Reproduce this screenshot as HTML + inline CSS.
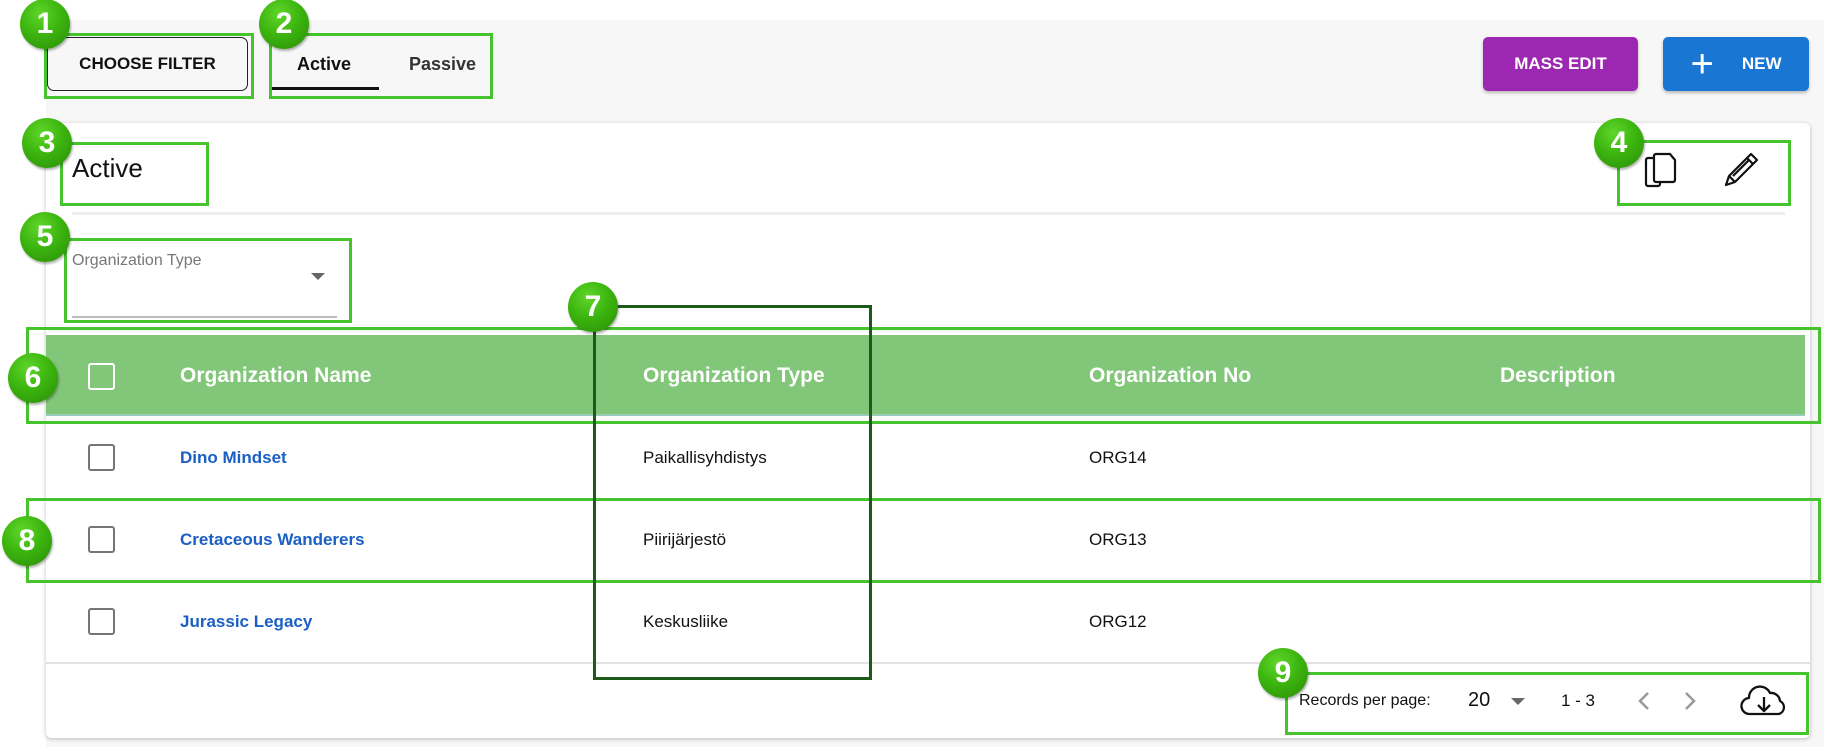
<!DOCTYPE html>
<html><head><meta charset="utf-8"><style>
*{box-sizing:border-box;margin:0;padding:0}
body{width:1824px;height:747px;position:relative;background:#fff;font-family:"Liberation Sans",Arial,sans-serif;overflow:hidden;color:#111}
.a{position:absolute}
.bg{left:46px;top:20px;right:0;bottom:0;background:#f7f7f7}
.card{left:46px;top:123px;width:1764px;height:615px;background:#fff;border-radius:5px;box-shadow:0 1px 4px rgba(0,0,0,.25)}
.btn{display:flex;align-items:center;justify-content:center;font-weight:bold;font-size:17px;border-radius:5px}
.box{border:3px solid #45c42d}
.badge{width:50px;height:50px;border-radius:50%;background:radial-gradient(circle at 40% 30%,#5fd62a 0%,#3cb50f 45%,#2a8c06 100%);color:#fff;font-weight:bold;font-size:30px;display:flex;align-items:center;justify-content:center;box-shadow:1px 2px 2px rgba(0,0,0,.3);transform:translate(-25px,-25px)}
.hd{color:#fff;font-weight:bold;font-size:21px;top:364px}
.cb{width:27px;height:27px;border:2.5px solid #757575;border-radius:3px}
.lnk{color:#1b5fc4;font-size:17px;font-weight:bold}
.tx{font-size:17px;color:#111}
</style></head><body>
<div class="a bg"></div>
<div class="a btn" style="left:47px;top:37px;width:201px;height:54px;border:1.5px solid #222;border-radius:7px;background:#f7f7f7;color:#111">CHOOSE FILTER</div>
<div class="a" style="left:297px;top:54px;font-size:18px;font-weight:bold">Active</div>
<div class="a" style="left:409px;top:54px;font-size:18px;font-weight:bold;color:#333">Passive</div>
<div class="a" style="left:271px;top:87px;width:108px;height:3px;background:#111"></div>
<div class="a btn" style="left:1483px;top:37px;width:155px;height:54px;background:#9c27b0;color:#fff;box-shadow:0 2px 3px rgba(0,0,0,.25)">MASS EDIT</div>
<div class="a btn" style="left:1663px;top:37px;width:146px;height:54px;background:#1976d2;color:#fff;box-shadow:0 2px 3px rgba(0,0,0,.25)"><span style="font-size:40px;font-weight:200;margin-right:28px;line-height:1">+</span>NEW</div>
<div class="a card"></div>
<div class="a" style="left:72px;top:153px;font-size:26px">Active</div>
<div class="a" style="left:72px;top:212px;width:1713px;height:3px;background:#eee"></div>
<svg class="a" style="left:1642px;top:150px" width="36" height="40" viewBox="0 0 36 40" fill="none" stroke="#111" stroke-width="2.2"><path d="M12 8H6a2 2 0 0 0-2 2v24a2 2 0 0 0 2 2h10a2 2 0 0 0 2-2v-2"/><path d="M14 4h14l5 6v20a2 2 0 0 1-2 2H14a2 2 0 0 1-2-2V6a2 2 0 0 1 2-2z"/></svg>
<svg class="a" style="left:1722px;top:150px" width="40" height="40" viewBox="0 0 40 40" fill="none" stroke="#111" stroke-width="2.2" stroke-linejoin="round"><path d="M29 4l6 6L13 32l-9 3 3-9z"/><path d="M25 8l6 6M7 26l6 6M11 26l16-16"/></svg>
<div class="a" style="left:72px;top:252px;font-size:16px;color:#777">Organization Type</div>
<div class="a" style="left:311px;top:273px;border-left:7px solid transparent;border-right:7px solid transparent;border-top:7px solid #666"></div>
<div class="a" style="left:72px;top:316px;width:265px;height:1.5px;background:#bbb"></div>
<div class="a" style="left:46px;top:335px;width:1759px;height:81px;background:#82c679;border-bottom:2px solid #9cb"></div>
<div class="a cb" style="left:88px;top:363px;border-color:#fff"></div>
<div class="a hd" style="left:180px">Organization Name</div>
<div class="a hd" style="left:643px">Organization Type</div>
<div class="a hd" style="left:1089px">Organization No</div>
<div class="a hd" style="left:1500px">Description</div>
<div class="a cb" style="left:88px;top:444px"></div>
<div class="a lnk" style="left:180px;top:448px">Dino Mindset</div>
<div class="a tx" style="left:643px;top:448px">Paikallisyhdistys</div>
<div class="a tx" style="left:1089px;top:448px">ORG14</div>
<div class="a cb" style="left:88px;top:526px"></div>
<div class="a lnk" style="left:180px;top:530px">Cretaceous Wanderers</div>
<div class="a tx" style="left:643px;top:530px">Piirijärjestö</div>
<div class="a tx" style="left:1089px;top:530px">ORG13</div>
<div class="a cb" style="left:88px;top:608px"></div>
<div class="a lnk" style="left:180px;top:612px">Jurassic Legacy</div>
<div class="a tx" style="left:643px;top:612px">Keskusliike</div>
<div class="a tx" style="left:1089px;top:612px">ORG12</div>
<div class="a" style="left:46px;top:662px;width:1764px;height:1.5px;background:#e2e2e2"></div>
<div class="a" style="left:1299px;top:692px;font-size:16px">Records per page:</div>
<div class="a" style="left:1468px;top:689px;font-size:20px">20</div>
<div class="a" style="left:1511px;top:698px;border-left:7px solid transparent;border-right:7px solid transparent;border-top:7px solid #666"></div>
<div class="a" style="left:1561px;top:691px;font-size:17px">1 - 3</div>
<svg class="a" style="left:1632px;top:689px" width="70" height="24" viewBox="0 0 70 24" fill="none" stroke="#999" stroke-width="2.5"><path d="M16 4l-8 8 8 8M54 4l8 8-8 8"/></svg>
<svg class="a" style="left:1740px;top:681px" width="48" height="40" viewBox="0 0 48 40" fill="none" stroke="#111" stroke-width="2.3" stroke-linejoin="round"><path d="M12 33H10a8 8 0 0 1-1-16 11 11 0 0 1 21-5 9 9 0 0 1 10 8 7 7 0 0 1-1 13H36" /><path d="M12 33h24M24 16v14M18 24l6 6 6-6"/></svg>
<div class="a box" style="left:44px;top:33px;width:210px;height:66px"></div>
<div class="a box" style="left:269px;top:33px;width:224px;height:66px"></div>
<div class="a box" style="left:60px;top:142px;width:149px;height:64px"></div>
<div class="a box" style="left:1617px;top:140px;width:174px;height:66px"></div>
<div class="a box" style="left:64px;top:238px;width:288px;height:85px"></div>
<div class="a box" style="left:26px;top:327px;width:1795px;height:97px"></div>
<div class="a box" style="left:26px;top:498px;width:1795px;height:85px"></div>
<div class="a box" style="left:593px;top:305px;width:279px;height:375px;border-color:#1e5a1a"></div>
<div class="a box" style="left:1285px;top:672px;width:524px;height:63px"></div>
<div class="a badge" style="left:45px;top:24px">1</div>
<div class="a badge" style="left:284px;top:24px">2</div>
<div class="a badge" style="left:47px;top:143px">3</div>
<div class="a badge" style="left:1619px;top:143px">4</div>
<div class="a badge" style="left:45px;top:237px">5</div>
<div class="a badge" style="left:33px;top:378px">6</div>
<div class="a badge" style="left:593px;top:307px">7</div>
<div class="a badge" style="left:27px;top:541px">8</div>
<div class="a badge" style="left:1283px;top:673px">9</div>
</body></html>
